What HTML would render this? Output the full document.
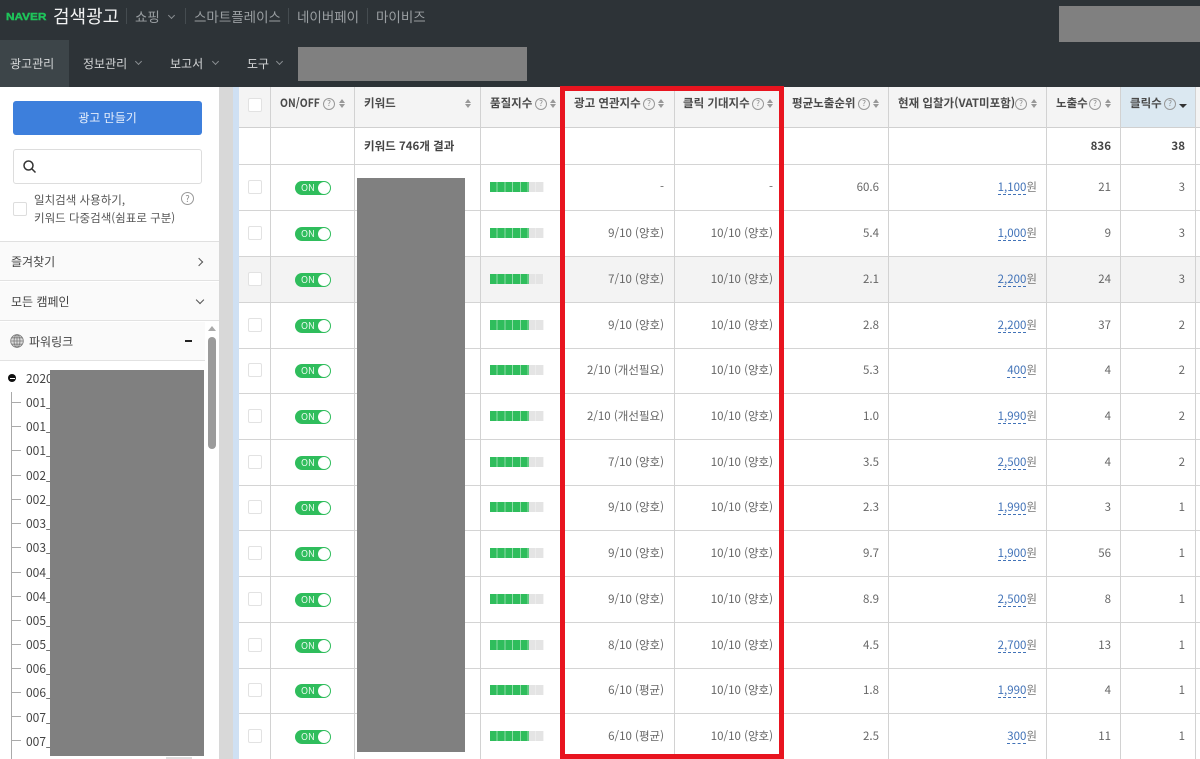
<!DOCTYPE html>
<html lang="ko"><head><meta charset="utf-8"><title>검색광고</title>
<style>
html,body{margin:0;padding:0;width:1200px;height:759px;overflow:hidden}
body{position:relative;background:#fff;font-family:"Noto Sans CJK KR","Liberation Sans",sans-serif;font-size:12px;color:#555}
div,span{position:absolute;white-space:nowrap}
.g{background:#808080}
.nav{color:#9a9fa2;font-size:13.5px;top:6px;line-height:20px}
.sep{background:#454c50;width:1px;height:16px;top:8px}
.nav2{color:#d4d6d7;font-size:12px;top:55px;line-height:18px}
.chev{width:4px;height:4px;border-right:1px solid #8a8f92;border-bottom:1px solid #8a8f92;transform:rotate(45deg)}
.side{left:0;width:219px;height:38px;background:#fafafa;border-bottom:1px solid #e2e2e2}
.sl{left:11px;font-size:12px;color:#444;line-height:18px}
.tk{left:12px;width:9px;height:1px;background:#aaa}
.tn{left:26px;font-size:12px;color:#444;line-height:16px}
.v{top:87px;width:1px;height:672px;background:#d2d2d2}
.r{left:239px;width:961px;height:45px;border-bottom:1px solid #d4d4d4}
.th{top:95px;font-size:11.5px;font-weight:700;color:#4a4a4a;line-height:16px}
.h{top:98px;width:10px;height:10px;border:1px solid #999;border-radius:50%;font-size:8px;line-height:10px;text-align:center;color:#888}
.s{top:99px;width:6px;height:9px}
.s:before,.s:after{content:"";position:absolute;left:0;border-left:3px solid transparent;border-right:3px solid transparent}
.s:before{top:0;border-bottom:4px solid #999}
.s:after{bottom:0;border-top:4px solid #999}
.cb{left:9px;top:15px;width:12px;height:12px;border:1px solid #e2e2e2;border-radius:2px;background:#fff}
.tg{left:56px;top:16px;width:36px;height:14px;border-radius:7px;background:#2fbd5c}
.tg b{position:absolute;left:6px;top:0;font:400 9.5px/13px "Noto Sans CJK KR",sans-serif;color:#e4f8ea}
.tg i{position:absolute;right:1px;top:1px;width:12px;height:12px;border-radius:50%;background:#fff}
.bar{left:251px;top:17px;width:54px;height:10px;background:repeating-linear-gradient(90deg,#e4e4e4 0 6.9px,#f4f4f4 6.9px 7.7px)}
.bar i{position:absolute;left:0;top:0;width:38.5px;height:10px;background:repeating-linear-gradient(90deg,#2fbd5c 0 6.7px,#8fdca8 6.7px 7.7px)}
.c{font-size:11.5px;line-height:16px;top:14px;color:#666}
.a{right:536px}.b{right:427px}.d{right:321px}.e{right:163px}.f{right:89px}.k{right:15px}
.e u{text-decoration:none;color:#4273b8;border-bottom:1px dashed #4273b8;line-height:13px;display:inline-block}
.e{color:#777}
.t{position:absolute}
</style></head><body>

<div style="left:0;top:0;width:1200px;height:87px;background:#2d3337"></div>
<div style="left:0;top:40px;width:69px;height:47px;background:#3d4549"></div>
<div style="left:6px;top:10px;font:700 10px/16px 'Liberation Sans',sans-serif;color:#1fc35a;transform:scaleX(1.18);transform-origin:left;-webkit-text-stroke:.4px #1fc35a">NAVER</div>
<div style="left:53px;top:3px;font-size:18px;line-height:26px;color:#f2f3f3">검색광고</div>
<div class="sep" style="left:126px"></div>
<div class="nav" style="left:135px">쇼핑</div>
<div class="chev" style="left:169px;top:13px"></div>
<div class="sep" style="left:185px"></div>
<div class="nav" style="left:194px">스마트플레이스</div>
<div class="sep" style="left:288px"></div>
<div class="nav" style="left:297px">네이버페이</div>
<div class="sep" style="left:367px"></div>
<div class="nav" style="left:376px">마이비즈</div>
<div class="g" style="left:1059px;top:6px;width:141px;height:36px"></div>
<div class="nav2" style="left:10px">광고관리</div>
<div class="nav2" style="left:83px">정보관리</div><div class="chev" style="left:136px;top:59px"></div>
<div class="nav2" style="left:170px">보고서</div><div class="chev" style="left:213px;top:59px"></div>
<div class="nav2" style="left:247px">도구</div><div class="chev" style="left:277px;top:59px"></div>
<div class="g" style="left:298px;top:47px;width:229px;height:34px"></div>

<div style="left:13px;top:101px;width:189px;height:34px;background:#3d7fdc;border-radius:3px;color:#e6eefb;font-size:12px;line-height:34px;text-align:center">광고 만들기</div>
<div style="left:13px;top:149px;width:187px;height:33px;border:1px solid #ddd;border-radius:3px"></div>
<svg class="t" style="left:22px;top:159px" width="15" height="15" viewBox="0 0 15 15"><circle cx="6.5" cy="6.5" r="4.5" fill="none" stroke="#333" stroke-width="1.5"/><path d="M10 10l3.5 3.5" stroke="#333" stroke-width="1.5"/></svg>
<div style="left:13px;top:202px;width:12px;height:12px;border:1px solid #ddd;border-radius:2px"></div>
<div style="left:34px;top:191px;font-size:11.5px;line-height:18px;color:#555">일치검색 사용하기,</div>
<div style="left:34px;top:209px;font-size:11.5px;line-height:18px;color:#555">키워드 다중검색(쉼표로 구분)</div>
<div style="left:181px;top:192px;width:11px;height:11px;border:1px solid #999;border-radius:50%;font-size:9px;line-height:11px;text-align:center;color:#888">?</div>
<div style="left:0;top:241px;width:219px;height:1px;background:#e0e0e0"></div>

<div class="side" style="top:242px"></div>
<div class="sl" style="top:253px">즐겨찾기</div>
<div class="chev" style="left:196px;top:259px;transform:rotate(-45deg);border-color:#555;width:5px;height:5px"></div>
<div class="side" style="top:282px"></div>
<div class="sl" style="top:293px">모든 캠페인</div>
<div class="chev" style="left:197px;top:297px;border-color:#555;width:5px;height:5px"></div>
<div class="side" style="top:322px;width:205px"></div>
<svg class="t" style="left:10px;top:334px" width="14" height="14" viewBox="0 0 14 14" fill="none" stroke="#777" stroke-width=".8"><circle cx="7" cy="7" r="6.3" fill="#ddd"/><ellipse cx="7" cy="7" rx="3" ry="6.3"/><path d="M7 .7v12.6M.7 7h12.6M1.6 3.8h10.8M1.6 10.2h10.8"/></svg>
<div class="sl" style="left:29px;top:333px">파워링크</div>
<div style="left:185px;top:340px;width:7px;height:2px;background:#222"></div>
<div style="left:208px;top:326px;border-left:4px solid transparent;border-right:4px solid transparent;border-bottom:5px solid #aaa"></div>
<div style="left:208px;top:337px;width:8px;height:112px;background:#9b9b9b;border-radius:4px"></div>

<div style="left:8px;top:374px;width:8px;height:8px;background:#111;border-radius:50%"></div>
<div style="left:9.5px;top:377.500px;width:5px;height:1px;background:#fff"></div>
<div class="tn" style="top:371px">2020</div>
<div style="left:11px;top:392px;width:1px;height:367px;background:#aaa"></div>
<div class="tk" style="top:402px"></div><div class="tn" style="top:395px">001_</div>
<div class="tk" style="top:426px"></div><div class="tn" style="top:419px">001_</div>
<div class="tk" style="top:450px"></div><div class="tn" style="top:443px">001_</div>
<div class="tk" style="top:475px"></div><div class="tn" style="top:468px">002_</div>
<div class="tk" style="top:499px"></div><div class="tn" style="top:492px">002_</div>
<div class="tk" style="top:523px"></div><div class="tn" style="top:516px">003_</div>
<div class="tk" style="top:547px"></div><div class="tn" style="top:540px">003_</div>
<div class="tk" style="top:572px"></div><div class="tn" style="top:565px">004_</div>
<div class="tk" style="top:596px"></div><div class="tn" style="top:589px">004_</div>
<div class="tk" style="top:620px"></div><div class="tn" style="top:613px">005_</div>
<div class="tk" style="top:644px"></div><div class="tn" style="top:637px">005_</div>
<div class="tk" style="top:668px"></div><div class="tn" style="top:661px">006_</div>
<div class="tk" style="top:692px"></div><div class="tn" style="top:685px">006_</div>
<div class="tk" style="top:716px"></div><div class="tn" style="top:710px">007_</div>
<div class="tk" style="top:740px"></div><div class="tn" style="top:734px">007_</div>
<div class="g" style="left:50px;top:370px;width:154px;height:386px"></div>
<div style="left:166px;top:757px;width:26px;height:2px;background:#ddd"></div>

<div style="left:219px;top:87px;width:14px;height:672px;background:#d8d8d8"></div>
<div style="left:233px;top:87px;width:6px;height:672px;background:#cfe0f3"></div>

<div style="left:239px;top:87px;width:961px;height:40px;background:#f4f4f4;border-bottom:1px solid #d0d0d0"></div>
<div style="left:1120px;top:87px;width:75px;height:40px;background:#dbe8f1"></div>
<div class="r" style="top:128px;height:36px"></div>
<div class="r" style="top:165px"><div class="cb"></div><div class="tg"><b>ON</b><i></i></div><div class="bar"><i></i></div><span class="c a" style="right:536px">-</span><span class="c b">-</span><span class="c d">60.6</span><span class="c e"><u>1,100</u>원</span><span class="c f">21</span><span class="c k">3</span></div>
<div class="r" style="top:211px"><div class="cb"></div><div class="tg"><b>ON</b><i></i></div><div class="bar"><i></i></div><span class="c a">9/10 (양호)</span><span class="c b">10/10 (양호)</span><span class="c d">5.4</span><span class="c e"><u>1,000</u>원</span><span class="c f">9</span><span class="c k">3</span></div>
<div class="r" style="top:257px;background:#f3f3f3"><div class="cb"></div><div class="tg"><b>ON</b><i></i></div><div class="bar"><i></i></div><span class="c a">7/10 (양호)</span><span class="c b">10/10 (양호)</span><span class="c d">2.1</span><span class="c e"><u>2,200</u>원</span><span class="c f">24</span><span class="c k">3</span></div>
<div class="r" style="top:303px"><div class="cb"></div><div class="tg"><b>ON</b><i></i></div><div class="bar"><i></i></div><span class="c a">9/10 (양호)</span><span class="c b">10/10 (양호)</span><span class="c d">2.8</span><span class="c e"><u>2,200</u>원</span><span class="c f">37</span><span class="c k">2</span></div>
<div class="r" style="top:348px"><div class="cb"></div><div class="tg"><b>ON</b><i></i></div><div class="bar"><i></i></div><span class="c a">2/10 (개선필요)</span><span class="c b">10/10 (양호)</span><span class="c d">5.3</span><span class="c e"><u>400</u>원</span><span class="c f">4</span><span class="c k">2</span></div>
<div class="r" style="top:394px"><div class="cb"></div><div class="tg"><b>ON</b><i></i></div><div class="bar"><i></i></div><span class="c a">2/10 (개선필요)</span><span class="c b">10/10 (양호)</span><span class="c d">1.0</span><span class="c e"><u>1,990</u>원</span><span class="c f">4</span><span class="c k">2</span></div>
<div class="r" style="top:440px"><div class="cb"></div><div class="tg"><b>ON</b><i></i></div><div class="bar"><i></i></div><span class="c a">7/10 (양호)</span><span class="c b">10/10 (양호)</span><span class="c d">3.5</span><span class="c e"><u>2,500</u>원</span><span class="c f">4</span><span class="c k">2</span></div>
<div class="r" style="top:485px"><div class="cb"></div><div class="tg"><b>ON</b><i></i></div><div class="bar"><i></i></div><span class="c a">9/10 (양호)</span><span class="c b">10/10 (양호)</span><span class="c d">2.3</span><span class="c e"><u>1,990</u>원</span><span class="c f">3</span><span class="c k">1</span></div>
<div class="r" style="top:531px"><div class="cb"></div><div class="tg"><b>ON</b><i></i></div><div class="bar"><i></i></div><span class="c a">9/10 (양호)</span><span class="c b">10/10 (양호)</span><span class="c d">9.7</span><span class="c e"><u>1,900</u>원</span><span class="c f">56</span><span class="c k">1</span></div>
<div class="r" style="top:577px"><div class="cb"></div><div class="tg"><b>ON</b><i></i></div><div class="bar"><i></i></div><span class="c a">9/10 (양호)</span><span class="c b">10/10 (양호)</span><span class="c d">8.9</span><span class="c e"><u>2,500</u>원</span><span class="c f">8</span><span class="c k">1</span></div>
<div class="r" style="top:623px"><div class="cb"></div><div class="tg"><b>ON</b><i></i></div><div class="bar"><i></i></div><span class="c a">8/10 (양호)</span><span class="c b">10/10 (양호)</span><span class="c d">4.5</span><span class="c e"><u>2,700</u>원</span><span class="c f">13</span><span class="c k">1</span></div>
<div class="r" style="top:668px"><div class="cb"></div><div class="tg"><b>ON</b><i></i></div><div class="bar"><i></i></div><span class="c a">6/10 (평균)</span><span class="c b">10/10 (양호)</span><span class="c d">1.8</span><span class="c e"><u>1,990</u>원</span><span class="c f">4</span><span class="c k">1</span></div>
<div class="r" style="top:714px"><div class="cb"></div><div class="tg"><b>ON</b><i></i></div><div class="bar"><i></i></div><span class="c a">6/10 (평균)</span><span class="c b">10/10 (양호)</span><span class="c d">2.5</span><span class="c e"><u>300</u>원</span><span class="c f">11</span><span class="c k">1</span></div>

<div class="v" style="left:270px"></div><div class="v" style="left:354px"></div><div class="v" style="left:480px"></div><div class="v" style="left:674px"></div><div class="v" style="left:783px"></div><div class="v" style="left:888px"></div><div class="v" style="left:1046px"></div><div class="v" style="left:1120px"></div><div class="v" style="left:1195px"></div>

<div style="left:248px;top:98px;width:12px;height:12px;border:1px solid #e2e2e2;border-radius:2px;background:#fff"></div>
<div class="th" style="left:280px;transform:scaleX(.9);transform-origin:left">ON/OFF</div><div class="h" style="left:323px">?</div><div class="s" style="left:339px"></div>
<div class="th" style="left:364px">키워드</div><div class="s" style="left:465px"></div>
<div class="th" style="left:490px">품질지수</div><div class="h" style="left:535px">?</div><div class="s" style="left:550px"></div>
<div class="th" style="left:574px">광고 연관지수</div><div class="h" style="left:643px">?</div><div class="s" style="left:658px"></div>
<div class="th" style="left:683px">클릭 기대지수</div><div class="h" style="left:752px">?</div><div class="s" style="left:767px"></div>
<div class="th" style="left:792px">평균노출순위</div><div class="h" style="left:858px">?</div><div class="s" style="left:873px"></div>
<div class="th" style="left:898px">현재 입찰가(VAT미포함)</div><div class="h" style="left:1015px">?</div><div class="s" style="left:1031px"></div>
<div class="th" style="left:1056px">노출수</div><div class="h" style="left:1089px">?</div><div class="s" style="left:1105px"></div>
<div class="th" style="left:1130px">클릭수</div><div class="h" style="left:1164px">?</div>
<div style="left:1179px;top:104px;border-left:4px solid transparent;border-right:4px solid transparent;border-top:4px solid #333"></div>

<div style="left:364px;top:138px;font-size:11.5px;font-weight:700;line-height:16px;color:#444">키워드 746개 결과</div>
<div style="right:89px;top:138px;font-size:11.5px;font-weight:700;line-height:16px;color:#444">836</div>
<div style="right:15px;top:138px;font-size:11.5px;font-weight:700;line-height:16px;color:#444">38</div>

<div class="g" style="left:357px;top:178px;width:108px;height:574px"></div>

<div style="left:560px;top:86px;width:214px;height:663px;border:5px solid #e8141f"></div>
</body></html>
